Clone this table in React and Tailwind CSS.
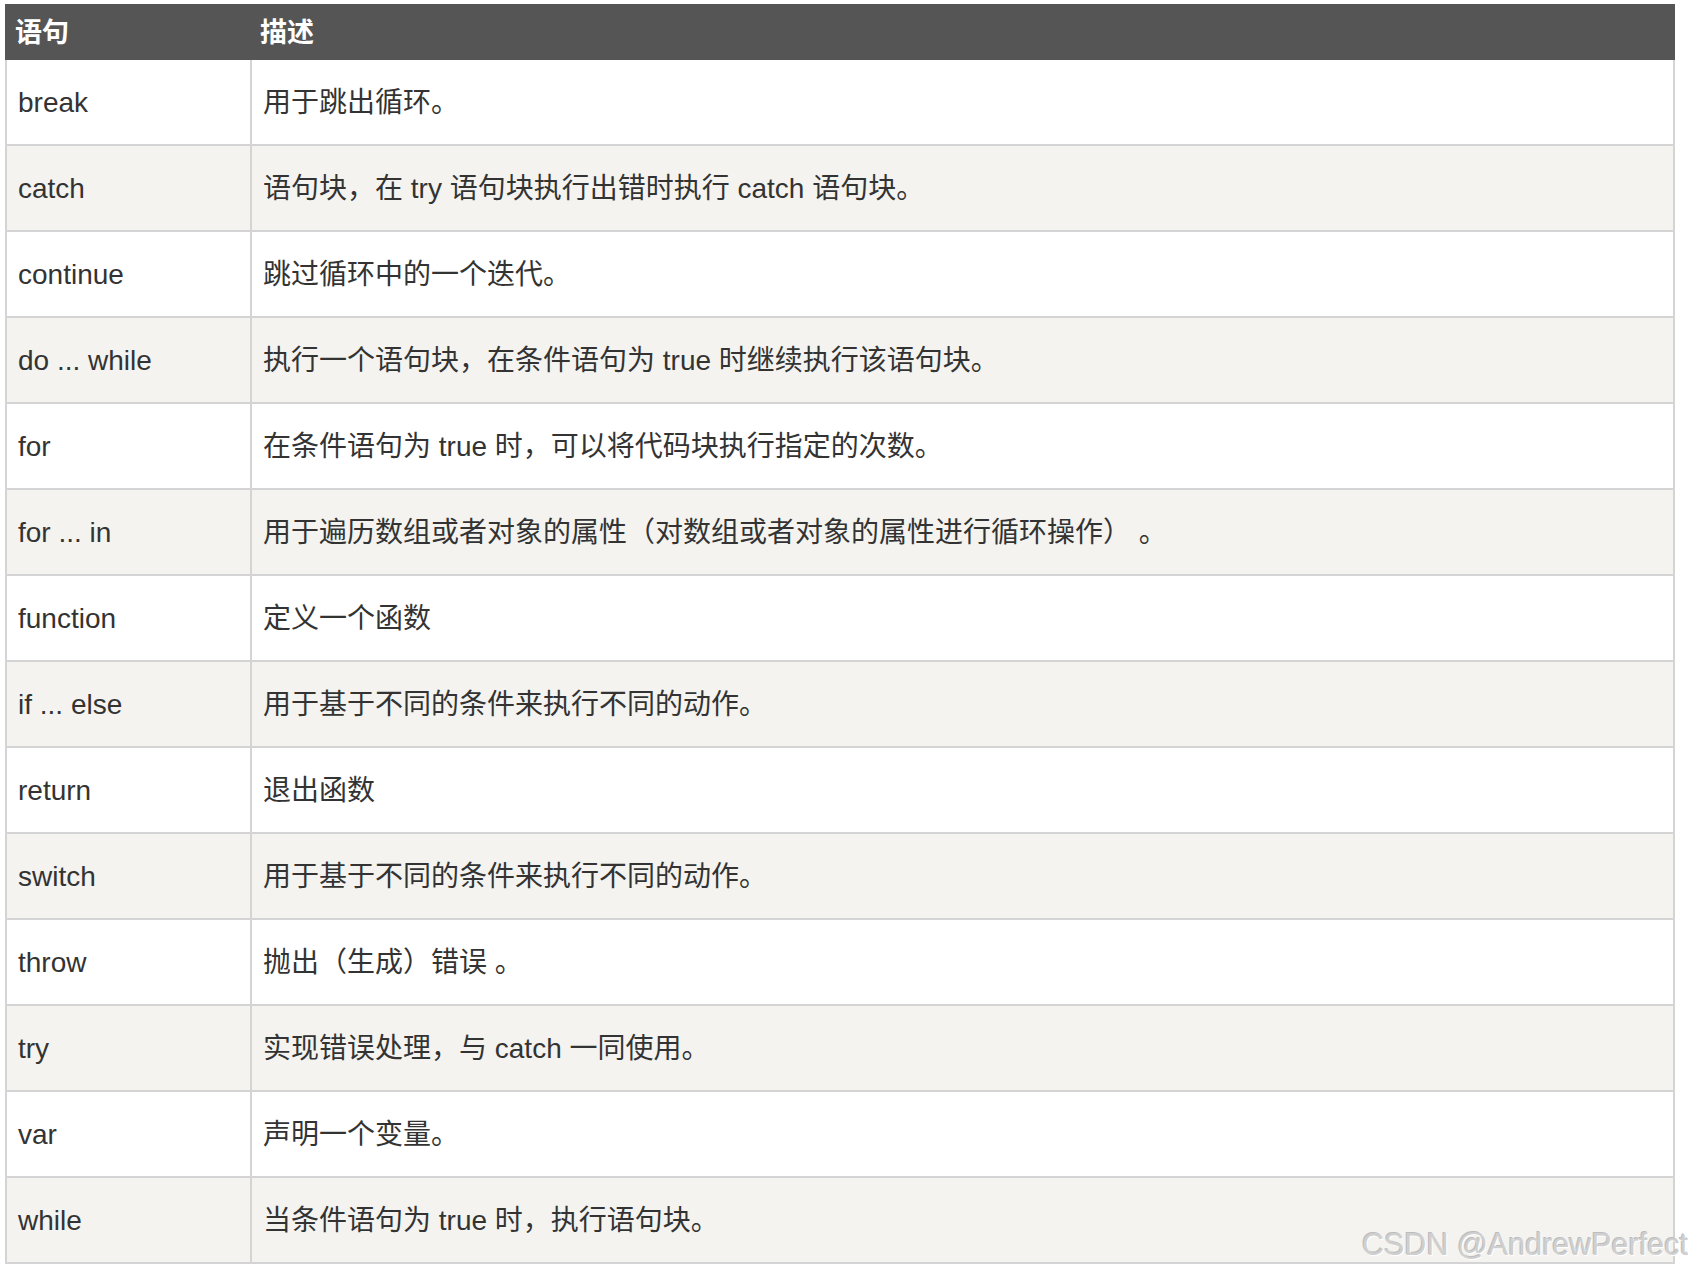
import React from "react";

const rows = [
  ["break", "用于跳出循环。"],
  ["catch", "语句块，在 try 语句块执行出错时执行 catch 语句块。"],
  ["continue", "跳过循环中的一个迭代。"],
  ["do ... while", "执行一个语句块，在条件语句为 true 时继续执行该语句块。"],
  ["for", "在条件语句为 true 时，可以将代码块执行指定的次数。"],
  ["for ... in", "用于遍历数组或者对象的属性（对数组或者对象的属性进行循环操作） 。"],
  ["function", "定义一个函数"],
  ["if ... else", "用于基于不同的条件来执行不同的动作。"],
  ["return", "退出函数"],
  ["switch", "用于基于不同的条件来执行不同的动作。"],
  ["throw", "抛出（生成）错误 。"],
  ["try", "实现错误处理，与 catch 一同使用。"],
  ["var", "声明一个变量。"],
  ["while", "当条件语句为 true 时，执行语句块。"],
];

export default function App() {
  return (
    <div
      className="relative w-[1692px] h-[1276px] bg-white"
      style={{ fontFamily: '"Liberation Sans", "Noto Sans CJK SC", sans-serif' }}
    >
      <div className="pt-[4px] pl-[5px]">
        <div className="w-[1670px]">
          <div className="flex h-[56px] bg-[#555555] text-white font-bold text-[27px]">
            <div className="w-[245px] flex items-center pl-[10px] pt-[3px]">语句</div>
            <div className="flex-1 flex items-center pl-[10px] pt-[3px]">描述</div>
          </div>
          {rows.map(([k, v], i) => (
            <div
              key={k}
              className={
                "flex h-[86px] border-x-2 border-b-2 border-[#d4d4d4] text-[28px] text-[#333333] " +
                (i % 2 === 1 ? "bg-[#f4f3f0]" : "bg-white")
              }
            >
              <div className="w-[243px] flex items-center pl-[11px] pt-[2px]">{k}</div>
              <div className="flex-1 flex items-center pl-[11px] pt-[2px] border-l-2 border-[#d4d4d4] whitespace-pre">{v}</div>
            </div>
          ))}
        </div>
      </div>
      <div
        className="absolute left-[1362px] top-[1225px] text-[30.5px] leading-[38px] text-[#cfcfcf] whitespace-nowrap"
        style={{ textShadow: "1px 1px 0 #ffffff, -1px -1px 0 #bdbdbd" }}
      >
        CSDN @AndrewPerfect
      </div>
    </div>
  );
}
